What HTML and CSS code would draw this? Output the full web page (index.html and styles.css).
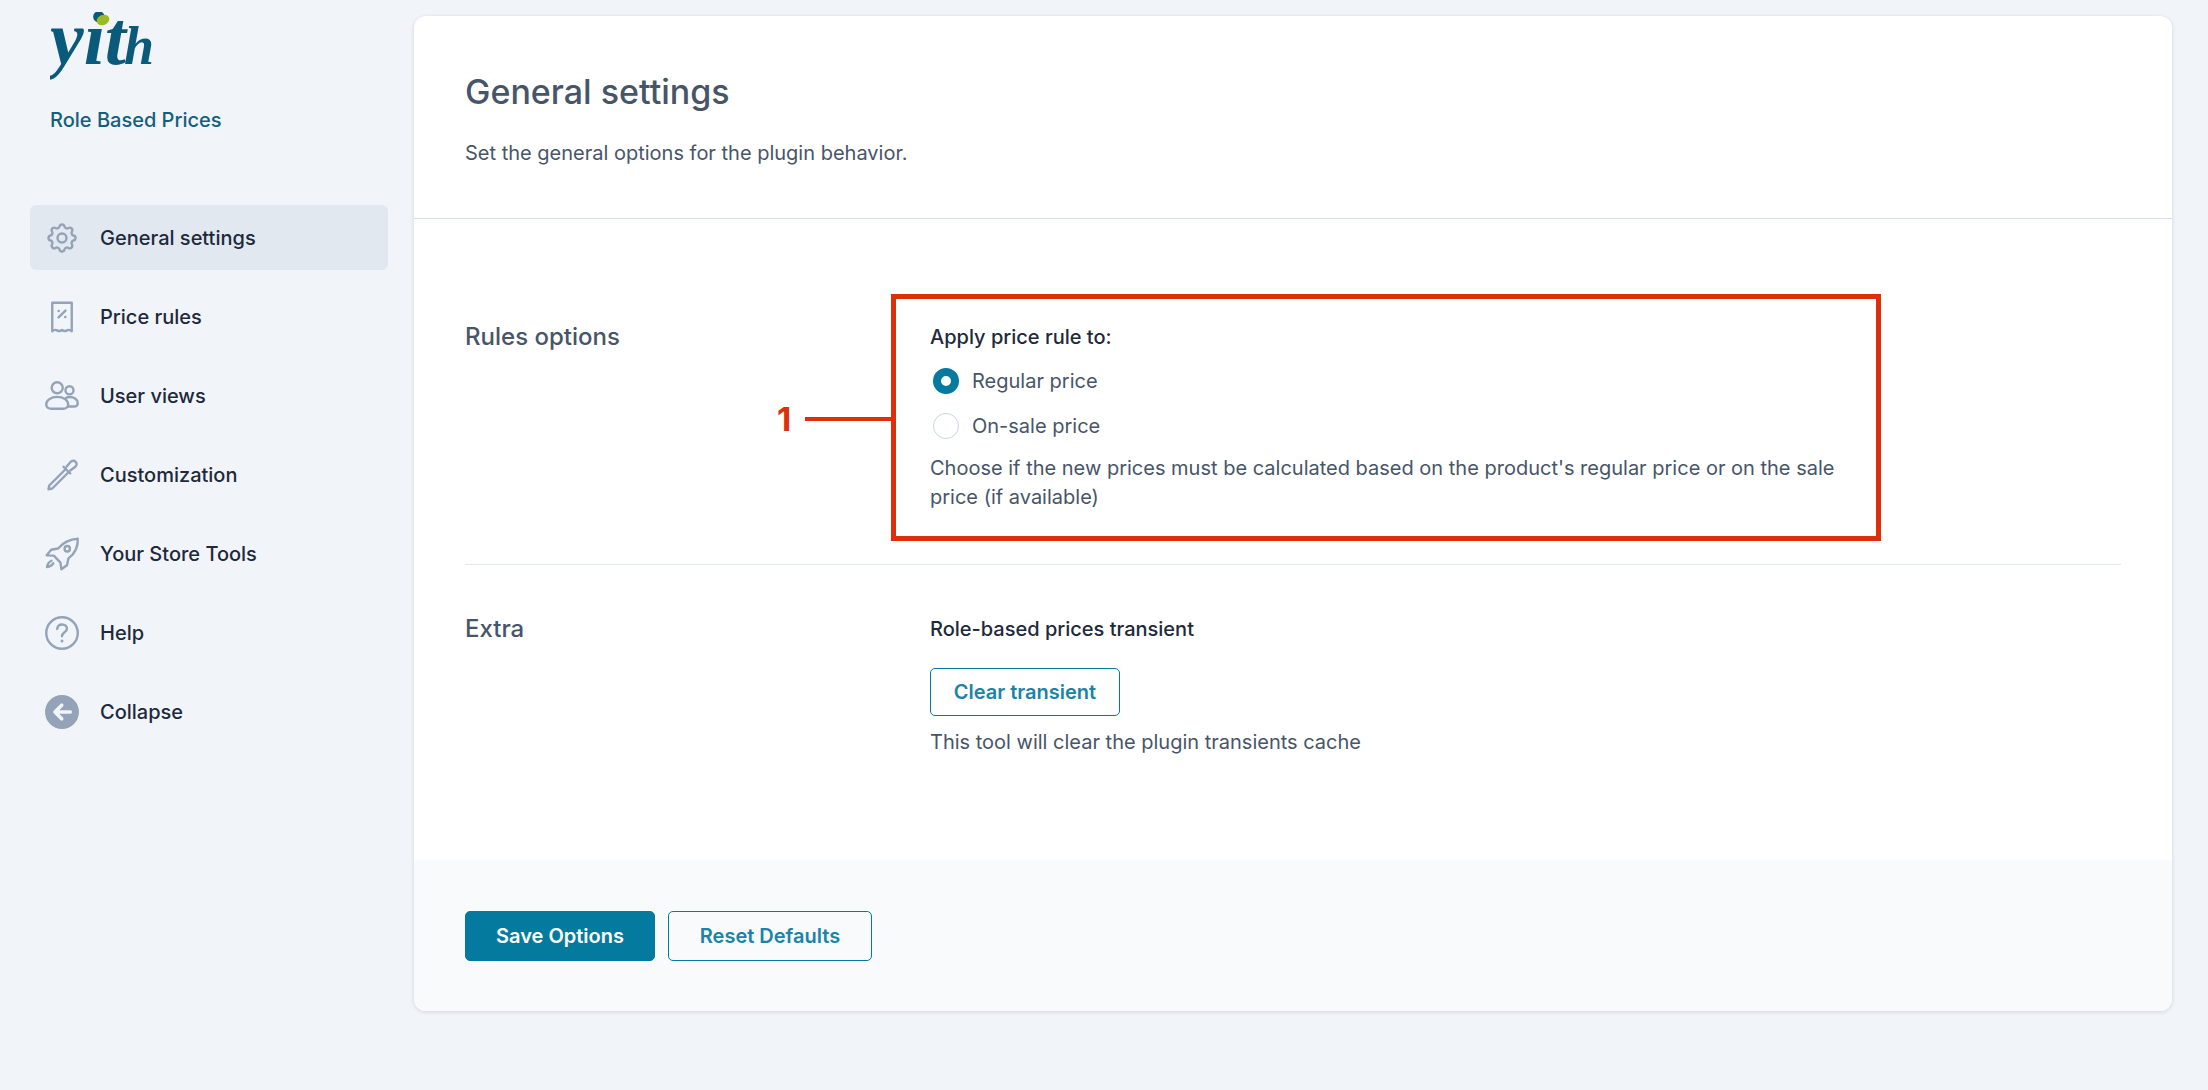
FILE: index.html
```html
<!DOCTYPE html>
<html lang="en">
<head>
  <meta charset="UTF-8">
  <meta name="viewport" content="width=device-width, initial-scale=1.0">
  <title>Role Based Prices</title>
  <link rel="stylesheet" href="styles.css">
</head>
<body>
  <!-- sidebar -->
  <aside class="sidebar">
    <div class="brand">
      <svg class="logo" width="120" height="78" viewBox="0 0 120 78">
        <text class="logo-word" x="0" y="52">yit<tspan class="logo-small" dx="-2">h</tspan></text>
        <ellipse cx="53" cy="8" rx="6.5" ry="5" transform="rotate(-20 53 8)" fill="#9bbb22"/>
      </svg>
      <div class="plugin-name">Role Based Prices</div>
    </div>
    <ul class="nav">
      <li class="nav-item current">
        <svg class="nav-icon" viewBox="0 0 24 24"><path d="M10.325 4.317c.426-1.756 2.924-1.756 3.35 0a1.724 1.724 0 002.573 1.066c1.543-.94 3.31.826 2.37 2.37a1.724 1.724 0 001.065 2.572c1.756.426 1.756 2.924 0 3.35a1.724 1.724 0 00-1.066 2.573c.94 1.543-.826 3.31-2.37 2.37a1.724 1.724 0 00-2.572 1.065c-.426 1.756-2.924 1.756-3.35 0a1.724 1.724 0 00-2.573-1.066c-1.543.94-3.31-.826-2.37-2.37a1.724 1.724 0 00-1.065-2.572c-1.756-.426-1.756-2.924 0-3.35a1.724 1.724 0 001.066-2.573c-.94-1.543.826-3.31 2.37-2.37.996.608 2.296.07 2.572-1.065z"/><circle cx="12" cy="12" r="3"/></svg>
        General settings
      </li>
      <li class="nav-item">
        <svg class="nav-icon" viewBox="0 0 24 24"><path d="M5.5 2.5h13v19c-1.2-1-2.2-1.2-3.2-.6-1.2.7-2.2.7-3.3-.2-1.1.9-2.1.9-3.3.2-1-.6-2-.4-3.2.6z"/><path d="M9.7 12.3l4.6-4.6"/><circle class="dot" cx="9.8" cy="8" r=".9"/><circle class="dot" cx="14.2" cy="12" r=".9"/></svg>
        Price rules
      </li>
      <li class="nav-item">
        <svg class="nav-icon" viewBox="0 0 24 24"><circle cx="8.8" cy="6.5" r="3.7"/><circle cx="17" cy="8.2" r="2.7"/><path d="M8.8 12.6c-4.2 0-7.3 2.3-7.3 5 0 1.8 1.5 2.9 3.4 2.9h7.8c1.9 0 3.4-1.1 3.4-2.9 0-2.700-3.100-5-7.300-5z"/><path d="M14.500 13.300c.8-.4 1.700-.6 2.600-.6 3.100 0 5.400 1.700 5.400 3.900 0 1.500-1.100 2.400-2.600 2.400h-3.900"/></svg>
        User views
      </li>
      <li class="nav-item">
        <svg class="nav-icon" viewBox="0 0 24 24"><path d="M13 6.500l4.500 4.500"/><path d="M14.500 8l-11 11-.5 2.500 2.500-.5 11-11"/><path d="M15 6.500l2.700-3.200c1-1 2.600-1 3.400-.1.900.9.800 2.400-.2 3.300L17.500 9"/></svg>
        Customization
      </li>
      <li class="nav-item">
        <svg class="nav-icon" viewBox="0 0 24 24"><path d="M22.500 1.800c.3 5.500-2 10-6.200 13.100l-1 4.600-3.700 2.700-.6-4.500-4.500-4.600-4.700-.2 3-3.700 4.600-.9C12.700 4.300 17.200 2.100 22.500 1.800z"/><circle cx="15.500" cy="8.500" r="1.800"/><path d="M5 16.500c-1.800.8-2.700 2.300-3 4.200 1.800-.2 3.200-1 4.200-2.500"/></svg>
        Your Store Tools
      </li>
      <li class="nav-item">
        <svg class="nav-icon" viewBox="0 0 24 24"><circle cx="12" cy="12" r="10.500"/><path d="M8.800 9.300c.2-1.800 1.500-3 3.300-3 1.900 0 3.200 1.200 3.200 2.800 0 2.400-3.300 2.500-3.300 5"/><circle class="dot" cx="12" cy="17.300" r="1"/></svg>
        Help
      </li>
      <li class="nav-item">
        <svg class="nav-icon" viewBox="0 0 24 24"><circle class="solid" cx="12" cy="12" r="10.500"/><path class="arrow" d="M17.500 12H7.500M11.800 7.500L7.300 12l4.500 4.500"/></svg>
        Collapse
      </li>
    </ul>
  </aside>

  <!-- main panel -->
  <main class="panel">
    <header class="panel-head">
      <h1>General settings</h1>
      <p>Set the general options for the plugin behavior.</p>
    </header>

    <div class="panel-body">
      <section class="group first">
        <h2>Rules options</h2>
        <div class="fields">
          <div class="field-title">Apply price rule to:</div>
          <div class="radio checked"><span class="radio-dot"></span>Regular price</div>
          <div class="radio"><span class="radio-dot"></span>On-sale price</div>
          <p class="desc">Choose if the new prices must be calculated based on the product's regular price or on the sale price (if available)</p>
        </div>
      </section>
      <section class="group">
        <h2>Extra</h2>
        <div class="fields">
          <div class="field-title">Role-based prices transient</div>
          <a class="btn btn-clear" href="javascript:;">Clear transient</a>
          <p class="desc">This tool will clear the plugin transients cache</p>
        </div>
      </section>
    </div>

    <footer class="panel-foot">
      <a class="btn btn-save" href="javascript:;">Save Options</a>
      <a class="btn btn-reset" href="javascript:;">Reset Defaults</a>
    </footer>

    <!-- red annotation on top of the screenshot -->
    <div class="mark-box"></div>
    <div class="mark-line"></div>
    <div class="mark-num">1</div>
  </main>
</body>
</html>
```

FILE: styles.css
```css
* {
  margin: 0;
  padding: 0;
  box-sizing: border-box;
}
ul {
  list-style: none;
}
html, body {
  height: 1090px;
  overflow: hidden;
}
body {
  display: flex;
  align-items: flex-start;
  background-color: #f1f5fa;
  font-family: Inter, "Liberation Sans", sans-serif;
  font-size: 20px;
  color: #475569;
}
a {
  text-decoration: none;
}

/* sidebar */
.sidebar {
  flex: none;
  width: 414px;
  padding: 12px 26px 0 30px;
}
.brand {
  padding-left: 20px;
  height: 193px;
}
.logo {
  display: block;
}
.logo-word {
  font: italic bold 76px "Liberation Serif", serif;
  fill: #0a5a7c;
}
.logo-small {
  font-size: 54px;
}
.plugin-name {
  margin-top: 16px;
  font-size: 20px;
  line-height: 28px;
  font-weight: 500;
  color: #155e7c;
}
.nav {
  display: flex;
  flex-direction: column;
  gap: 14px;
}
.nav-item {
  display: flex;
  align-items: center;
  gap: 20px;
  height: 65px;
  padding-left: 14px;
  border-radius: 6px;
  font-weight: 450;
  color: #1e293b;
}
.nav-item.current {
  background-color: #e2e8f0;
}
.nav-icon {
  flex: none;
  width: 36px;
  height: 36px;
  fill: none;
  stroke: #94a3b8;
  stroke-width: 1.6;
  stroke-linecap: round;
  stroke-linejoin: round;
}
.nav-icon .dot {
  fill: #94a3b8;
  stroke: none;
}
.nav-icon .solid {
  fill: #94a3b8;
}
.nav-icon .arrow {
  stroke: #f1f5fa;
  stroke-width: 2.4;
}

/* main panel */
.panel {
  position: relative;
  flex: none;
  display: flex;
  flex-direction: column;
  width: 1758px;
  height: 995px;
  margin-top: 16px;
  background-color: #fff;
  border-radius: 12px;
  box-shadow: 0 1px 4px rgba(15, 23, 42, 0.14);
}
.panel-head {
  height: 203px;
  padding: 54px 51px 0;
  border-bottom: 1px solid #d9dee5;
}
.panel-head h1 {
  font-size: 34px;
  line-height: 44px;
  font-weight: 500;
  color: #475569;
}
.panel-head p {
  margin-top: 25px;
  line-height: 28px;
}
.panel-body {
  flex: 1;
  padding: 0 51px;
}
.group {
  display: flex;
  padding-top: 49px;
}
.group.first {
  height: 346px;
  padding-top: 103px;
  border-bottom: 1px solid #e2e8f0;
}
.group h2 {
  flex: none;
  width: 465px;
  font-size: 24px;
  line-height: 30px;
  font-weight: 500;
  color: #475569;
}
.fields {
  width: 930px;
}
.field-title {
  line-height: 30px;
  font-weight: 500;
  color: #1e293b;
}
.radio {
  display: flex;
  align-items: center;
  gap: 13px;
  height: 45px;
  margin-top: 0;
  padding-left: 3px;
}
.first .radio.checked {
  margin-top: 6px;
}
.radio-dot {
  flex: none;
  width: 26px;
  height: 26px;
  border: 1px solid #cbd5e1;
  border-radius: 50%;
  background-color: #fff;
}
.radio.checked .radio-dot {
  border: 8px solid #047a9e;
}
.desc {
  line-height: 29px;
}
.first .desc {
  margin-top: 6px;
}
.btn {
  display: inline-flex;
  align-items: center;
  justify-content: center;
  height: 50px;
  border: 1px solid #047a9e;
  border-radius: 5px;
  font-weight: 600;
  color: #1b84a6;
}
.btn-clear {
  width: 190px;
  height: 48px;
  margin: 24px 0 12px;
}
.panel-foot {
  display: flex;
  gap: 13px;
  height: 151px;
  padding: 51px 51px 0;
  background-color: #f8fafc;
  border-radius: 0 0 12px 12px;
}
.btn-save {
  width: 190px;
  background-color: #047a9e;
  color: #fff;
}
.btn-reset {
  width: 204px;
}

/* annotation */
.mark-box {
  position: absolute;
  left: 477px;
  top: 278px;
  width: 990px;
  height: 247px;
  border: 5px solid #dc2f0b;
}
.mark-line {
  position: absolute;
  left: 391px;
  top: 401px;
  width: 87px;
  height: 4px;
  background-color: #dc2f0b;
}
.mark-num {
  position: absolute;
  left: 363px;
  top: 385px;
  font-size: 33px;
  line-height: 36px;
  font-weight: 700;
  color: #dc2f0b;
}
```
